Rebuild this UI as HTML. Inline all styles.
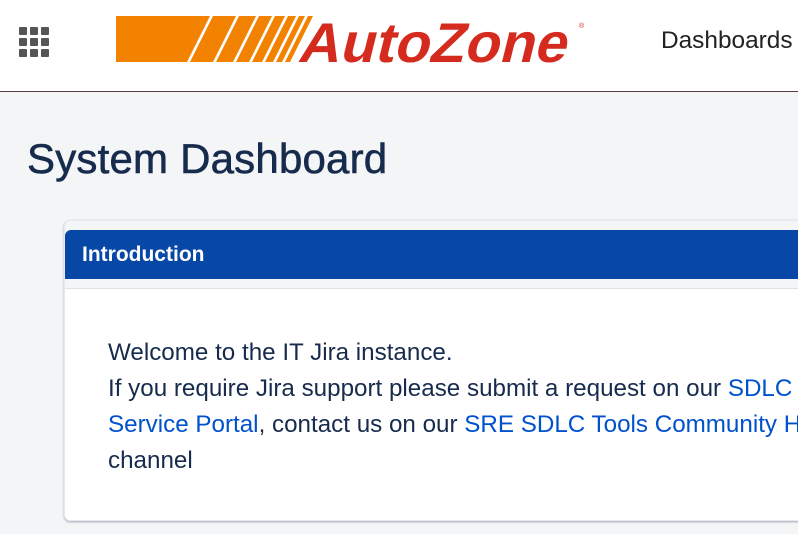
<!DOCTYPE html>
<html><head><style>
*{margin:0;padding:0;box-sizing:border-box}
body{width:798px;height:534px;overflow:hidden;background:#f4f5f7;font-family:"Liberation Sans","DejaVu Sans",sans-serif;position:relative}
.top{position:absolute;left:0;top:0;width:798px;height:92px;background:#fff;border-bottom:1px solid #5a3a3a}
.dot{position:absolute;width:8px;height:8px;background:#555;border-radius:1px}
.nav{position:absolute;left:661px;top:27px;font-size:24.4px;color:#222;white-space:nowrap}
h1{position:absolute;left:27px;top:135px;font-size:42px;font-weight:normal;color:#172b4d;letter-spacing:0.2px;white-space:nowrap;-webkit-text-stroke:0.6px #172b4d}
.card{position:absolute;left:64px;top:220px;width:760px;height:301px;background:#f4f5f7;border:1px solid #e6e8ec;border-radius:6px;box-shadow:0 1px 2px rgba(9,30,66,.35);overflow:hidden}
.hdr{position:absolute;left:0;top:9px;width:100%;height:49px;background:#0747a6;color:#fff;font-weight:bold;font-size:21px;padding:13px 0 0 17px;border-radius:6px 0 0 0}
.body{position:absolute;left:0;top:67px;width:100%;height:234px;background:#fff;border-top:1px solid #dfe1e6}
.txt{position:absolute;left:43px;top:46px;font-size:24.2px;line-height:36px;color:#172b4d;white-space:nowrap}
a{color:#0052cc;text-decoration:none}
</style></head><body>
<div class="top">
<div class="dot" style="left:19px;top:27px"></div><div class="dot" style="left:30px;top:27px"></div><div class="dot" style="left:41px;top:27px"></div>
<div class="dot" style="left:19px;top:38px"></div><div class="dot" style="left:30px;top:38px"></div><div class="dot" style="left:41px;top:38px"></div>
<div class="dot" style="left:19px;top:49px"></div><div class="dot" style="left:30px;top:49px"></div><div class="dot" style="left:41px;top:49px"></div>
<svg style="position:absolute;left:0;top:0" width="600" height="90" viewBox="0 0 600 90">
<polygon points="116,16 210,16 187,62 116,62" fill="#f38200"/>
<polygon points="213,16 236,16 213,62 190,62" fill="#f38200"/>
<polygon points="239,16 256,16 233,62 216,62" fill="#f38200"/>
<polygon points="259,16 272,16 249,62 236,62" fill="#f38200"/>
<polygon points="275,16 285,16 262,62 252,62" fill="#f38200"/>
<polygon points="288,16 296,16 273,62 265,62" fill="#f38200"/>
<polygon points="299,16 305,16 282,62 276,62" fill="#f38200"/>
<polygon points="308,16 313,16 290,62 285,62" fill="#f38200"/>
<g transform="translate(0,62) skewX(-14)">
<text x="297" y="0" font-family="Liberation Sans,sans-serif" font-weight="bold" font-size="56" fill="#d52b1e" textLength="268" lengthAdjust="spacingAndGlyphs">AutoZone</text>
</g>
<text x="579" y="28" font-size="7" fill="#d52b1e">®</text>
</svg>
<div class="nav">Dashboards</div>
</div>
<h1>System Dashboard</h1>
<div class="card">
<div class="hdr">Introduction</div>
<div class="body"><div class="txt">Welcome to the IT Jira instance.<br>If you require Jira support please submit a request on our <a>SDLC</a><br><a>Service Portal</a>, contact us on our <a>SRE SDLC Tools Community Hub</a><br>channel</div></div>
</div>
</body></html>
